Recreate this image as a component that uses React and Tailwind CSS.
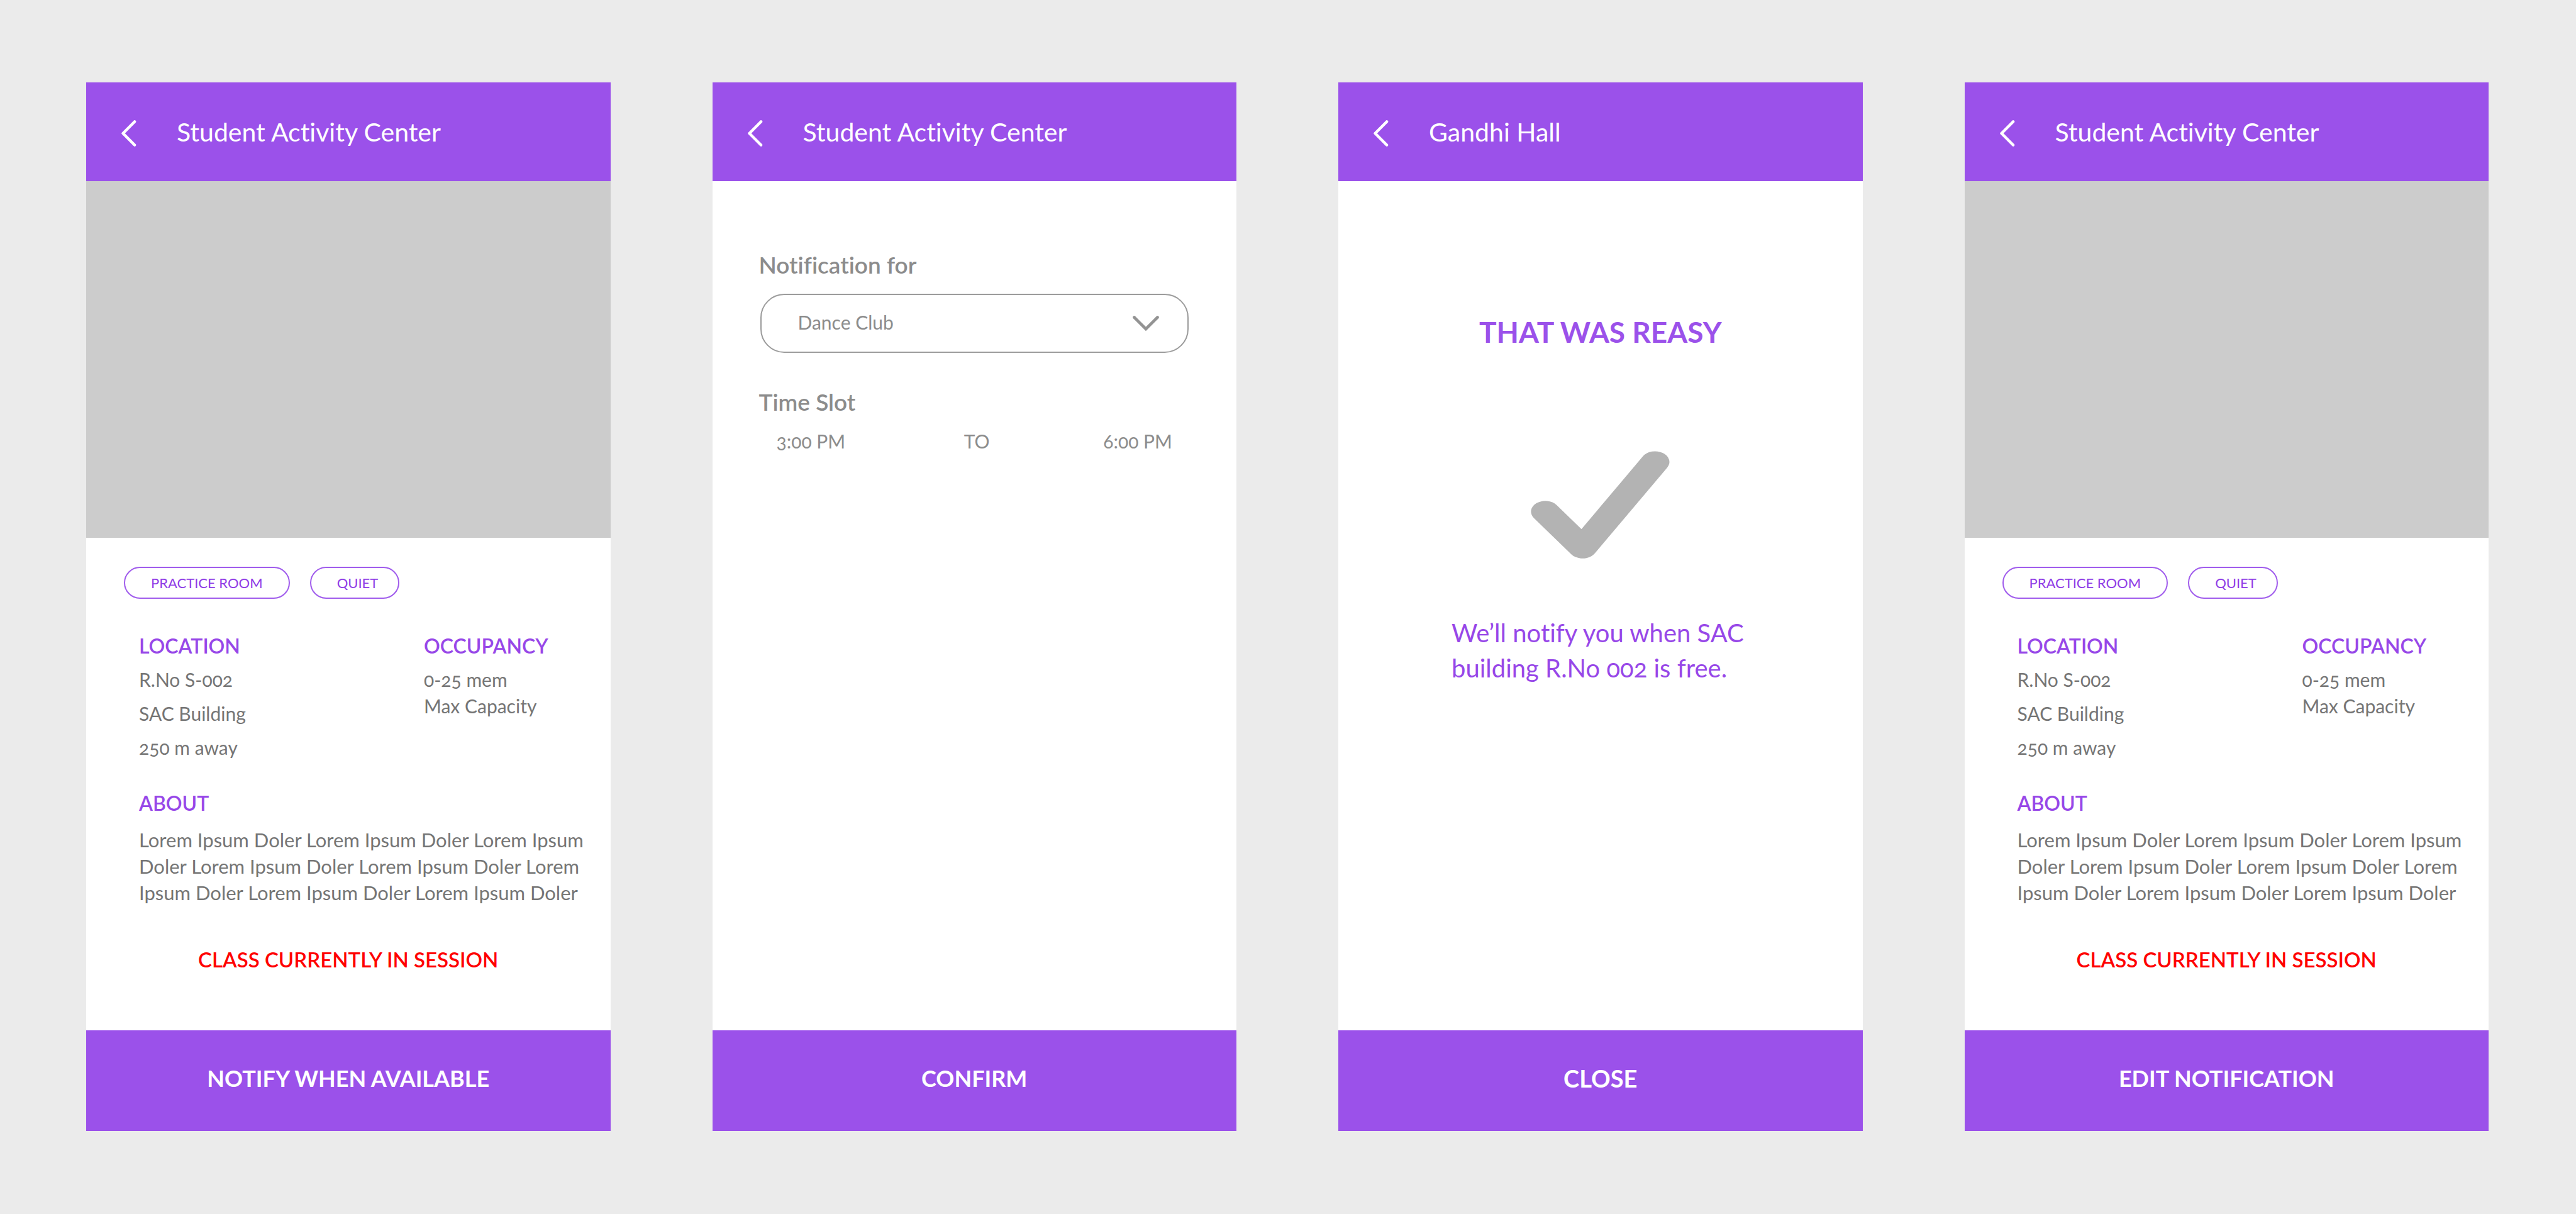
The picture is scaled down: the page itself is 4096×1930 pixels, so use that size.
const LOREM =
  'Lorem Ipsum Doler Lorem Ipsum Doler Lorem Ipsum Doler Lorem Ipsum Doler Lorem Ipsum Doler Lorem Ipsum Doler Lorem Ipsum Doler Lorem Ipsum Doler';

function Screen({ title, action, actionClass = 'text-[36px]', children }) {
  return (
    <section className="flex min-w-0 flex-col bg-white">
      <header className="flex h-[157px] items-center gap-16 bg-[#9b51ea] pl-14 text-white">
        <button type="button" aria-label="Back" className="mt-1">
          <svg viewBox="0 0 24 42" className="h-[42px] w-6" fill="none" stroke="currentColor" strokeWidth="4.6" strokeLinecap="round" strokeLinejoin="round">
            <path d="M21 2.5 2.6 21 21 39.5" />
          </svg>
        </button>
        <h1 className="text-[41px] leading-none">{title}</h1>
      </header>
      <div className="flex flex-1 flex-col">{children}</div>
      <button type="button" className={`h-40 bg-[#9b51ea] pb-2 font-bold text-white ${actionClass}`}>
        {action}
      </button>
    </section>
  );
}

function Heading({ children }) {
  return <h2 className="text-[32px] leading-[42px] font-semibold text-[#9747e8]">{children}</h2>;
}

function RoomScreen({ action }) {
  return (
    <Screen title="Student Activity Center" action={action}>
      <div role="img" aria-label="Room photo" className="h-[567px] bg-[#cccccc]" />
      <ul className="mt-[46px] flex gap-8 pl-[60px] text-[22px] text-[#8f3ce6]">
        <li className="flex h-[51px] items-center rounded-full border-2 border-[#a05cec] px-[41px]">PRACTICE ROOM</li>
        <li className="flex h-[51px] items-center rounded-full border-2 border-[#a05cec] pr-8 pl-[41px]">QUIET</li>
      </ul>
      <div className="mt-[54px] flex pl-[84px] text-[30px] text-[#757575]">
        <div className="w-[453px]">
          <Heading>LOCATION</Heading>
          <div className="mt-[5px] leading-[54px]">
            <p>R.No S-002</p>
            <p>SAC Building</p>
            <p>250 m away</p>
          </div>
        </div>
        <div>
          <Heading>OCCUPANCY</Heading>
          <div className="mt-[11px] leading-[42px]">
            <p>0-25 mem</p>
            <p>Max Capacity</p>
          </div>
        </div>
      </div>
      <div className="mt-[41px] pr-8 pl-[84px]">
        <Heading>ABOUT</Heading>
        <p className="mt-4 h-[126px] overflow-hidden text-[31px] leading-[42px] text-[#757575]">{LOREM}</p>
      </div>
      <p className="mt-16 text-center text-[33px] leading-[42px] font-semibold text-[#ff0000]">CLASS CURRENTLY IN SESSION</p>
    </Screen>
  );
}

function NotifyScreen() {
  return (
    <Screen title="Student Activity Center" action="CONFIRM">
      <form className="mt-[109px] px-[76px] text-[30px] text-[#8c8c8c]">
        <label htmlFor="club" className="-ml-0.5 block text-[37px] leading-[48px] font-semibold">
          Notification for
        </label>
        <div className="relative mt-[22px]">
          <select
            id="club"
            defaultValue="Dance Club"
            className="block h-[94px] w-full appearance-none rounded-[38px] border-2 border-[#9c9c9c] bg-white pb-1 pl-[58px]"
          >
            <option>Dance Club</option>
          </select>
          <svg
            viewBox="0 0 42 24"
            className="pointer-events-none absolute top-[35px] right-[47px] h-6 w-[42px]"
            fill="none"
            stroke="#939393"
            strokeWidth="4.6"
            strokeLinecap="round"
          >
            <path d="M2.5 2.5 21 21 39.5 2.5" />
          </svg>
        </div>
        <h2 className="mt-[54px] -ml-0.5 text-[37px] leading-[48px] font-semibold">Time Slot</h2>
        <div className="mt-[17px] grid grid-cols-3 px-[26px] leading-[42px]">
          <span>3:00 PM</span>
          <span className="pl-2 text-center">TO</span>
          <span className="text-right">6:00 PM</span>
        </div>
      </form>
    </Screen>
  );
}

function DoneScreen() {
  return (
    <Screen title="Gandhi Hall" action="CLOSE" actionClass="text-[38px]">
      <h2 className="mt-[212px] text-center text-[46px] leading-[56px] font-bold text-[#9b51ea]">THAT WAS REASY</h2>
      <svg
        viewBox="0 0 165 171"
        preserveAspectRatio="none"
        className="mt-[161px] h-[171px] w-[221px] self-center"
        fill="none"
        stroke="#b3b3b3"
        strokeWidth="34"
        strokeLinecap="round"
        strokeLinejoin="round"
      >
        <path d="M17.3 96.3 61.6 153.8 147.6 17.4" />
      </svg>
      <p className="mt-[90px] pr-[150px] pl-[180px] text-[40px] leading-[56px] text-[#9747e8]">
        We’ll notify you when SAC building R.No 002 is free.
      </p>
    </Screen>
  );
}

export default function App() {
  return (
    <main className="grid min-h-screen grid-cols-4 gap-[162px] bg-[#ebebeb] pt-[131px] pr-[139px] pb-[132px] pl-[137px] font-['Lato',sans-serif] oldstyle-nums [font-variant-ligatures:no-common-ligatures]">
      <RoomScreen action="NOTIFY WHEN AVAILABLE" />
      <NotifyScreen />
      <DoneScreen />
      <RoomScreen action="EDIT NOTIFICATION" />
    </main>
  );
}
